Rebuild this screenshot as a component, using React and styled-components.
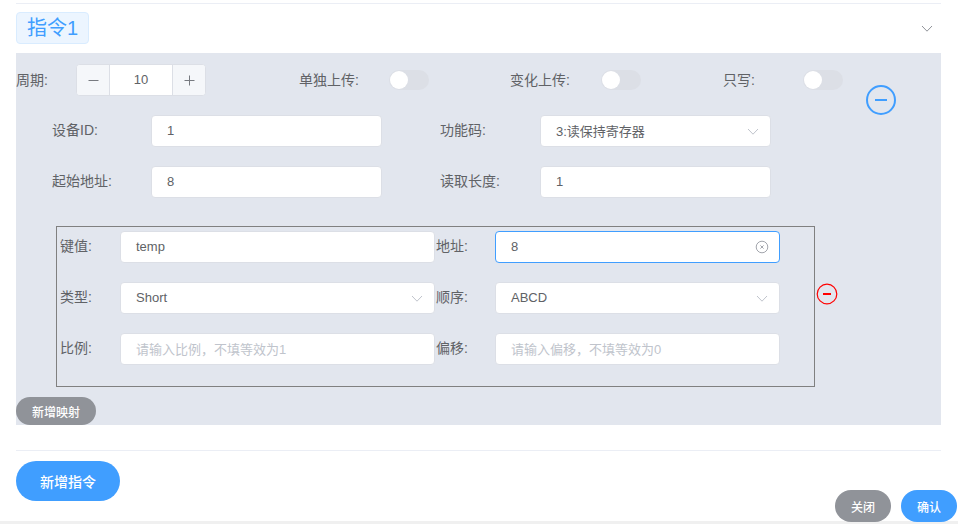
import React from 'react';
import styled, { createGlobalStyle } from 'styled-components';

const GlobalStyle = createGlobalStyle`
  html, body {
    margin: 0;
    padding: 0;
    background: #fff;
  }
  body {
    font-family: "Liberation Sans", "Noto Sans CJK SC", sans-serif;
    font-size: 14px;
    color: #606266;
  }
`;

const Page = styled.div`
  width: 958px;
  height: 524px;
  overflow: hidden;
  display: flex;
  flex-direction: column;
`;

const Content = styled.div`
  height: 521px;
  flex: none;
  padding: 3px 17px 0 16px;
  box-sizing: border-box;
  display: flex;
  flex-direction: column;
`;

const CollapseHeader = styled.div`
  border-top: 1px solid #ebeef5;
  height: 50px;
  flex: none;
  display: flex;
  align-items: flex-start;
  justify-content: space-between;
  padding-top: 8px;
  box-sizing: border-box;
`;

const Tag = styled.span`
  box-sizing: border-box;
  width: 73px;
  height: 32px;
  line-height: 30px;
  text-align: center;
  font-size: 20px;
  color: #409eff;
  background: #ecf5ff;
  border: 1px solid #d9ecff;
  border-radius: 4px;
`;

const Chevron = ({ color = '#c0c4cc' }) => (
  <svg width="12" height="12" viewBox="0 0 12 12" fill="none">
    <path d="M1 4l5 5.2L11 4" stroke={color} strokeWidth="1" />
  </svg>
);

const HeaderArrow = styled.span`
  display: flex;
  margin: 10px 8px 0 0;
`;

const Panel = styled.div`
  height: 372px;
  flex: none;
  background: #e2e6ee;
  display: flex;
  flex-direction: column;
`;

const TopRow = styled.div`
  height: 32px;
  display: flex;
  align-items: center;
`;

const Label = styled.span`
  width: ${p => p.$width}px;
  flex: none;
  margin-left: ${p => p.$left || 0}px;
  line-height: 30px;
  white-space: nowrap;
`;

const FormLabel = styled(Label)`
  margin-bottom: 2px;
`;

const Stepper = styled.div`
  box-sizing: border-box;
  width: 130px;
  height: 32px;
  display: flex;
  background: #fff;
  border: 1px solid #dcdfe6;
  border-radius: 4px;
  overflow: hidden;
  font-size: 13px;
`;

const StepButton = styled.span`
  width: 32px;
  flex: none;
  display: flex;
  align-items: center;
  justify-content: center;
  background: #f5f7fa;
  ${p => (p.$right ? 'border-left' : 'border-right')}: 1px solid #dcdfe6;
`;

const StepIcon = styled.svg`
  margin-left: 1px;
`;

const StepValue = styled.span`
  flex: 1;
  text-align: center;
  line-height: 29px;
`;

const Switch = styled.span`
  width: 40px;
  height: 20px;
  flex: none;
  border-radius: 10px;
  background: #dcdfe6;
  position: relative;

  &::after {
    content: '';
    position: absolute;
    left: 1px;
    top: 1px;
    width: 18px;
    height: 18px;
    border-radius: 50%;
    background: #fff;
  }
`;

const FormBlock = styled.div`
  margin-top: 11px;
  display: flex;
  align-items: flex-start;
`;

const FormRow = styled.div`
  display: flex;
  align-items: center;
  margin-top: 19px;
  margin-left: 36px;
`;

const Field = styled.div`
  box-sizing: border-box;
  width: ${p => p.$width}px;
  height: 32px;
  flex: none;
  display: flex;
  align-items: center;
  justify-content: space-between;
  padding: 0 11px 0 15px;
  background: #fff;
  border: 1px solid ${p => (p.$focus ? '#409eff' : '#dcdfe6')};
  border-radius: 4px;
  font-size: 13px;
  color: ${p => (p.$placeholder ? '#c0c4cc' : '#606266')};
  white-space: nowrap;
`;

const FieldText = styled.span`
  margin-bottom: 2px;
`;

const RemoveCommand = styled.svg`
  flex: none;
  margin: 20px 0 0 22px;
`;

const MappingWrap = styled.div`
  margin: 28px 0 0 40px;
  display: flex;
  align-items: flex-start;
`;

const MappingBox = styled.div`
  box-sizing: border-box;
  width: 759px;
  height: 161px;
  border: 1px solid #808080;
  padding-top: 4px;
  display: flex;
  flex-direction: column;
  gap: 19px;
`;

const MappingRow = styled.div`
  display: flex;
  align-items: center;
  padding-left: 3px;
`;

const RemoveMapping = styled.svg`
  flex: none;
  margin: 57px 0 0 1px;
`;

const ClearSvg = styled.svg`
  margin-right: -1px;
`;

const Pill = styled.button`
  border: none;
  padding: 0;
  width: ${p => p.$width}px;
  height: ${p => p.$height}px;
  border-radius: ${p => p.$height / 2}px;
  background: ${p => (p.$gray ? '#909399' : '#409eff')};
  color: #fff;
  font-family: inherit;
  font-size: ${p => p.$size || 12}px;
  font-weight: 500;
  flex: none;
`;

const AddMapping = styled(Pill)`
  margin-top: 10px;
`;

const Divider = styled.div`
  margin-top: 25px;
  border-top: 1px solid #ebeef5;
`;

const BottomRow = styled.div`
  height: 61px;
  flex: none;
  margin: 10px -17px 0 0;
  padding-right: 1px;
  display: flex;
  align-items: flex-end;
  position: relative;
  z-index: 1;
`;

const AddCommand = styled(Pill)`
  align-self: flex-start;
  margin-right: auto;
`;

const Close = styled(Pill)`
  margin-right: 10px;
`;

const BottomBar = styled.div`
  height: 3px;
  flex: none;
  background: #f0f0f0;
`;

const ClearIcon = () => (
  <ClearSvg width="14" height="14" viewBox="0 0 14 14" fill="none" stroke="#a3a6ad">
    <circle cx="7" cy="7" r="5.8" />
    <path d="M5.4 5.4l3.2 3.2M8.6 5.4l-3.2 3.2" />
  </ClearSvg>
);

const Minus = () => (
  <StepIcon width="11" height="11" viewBox="0 0 11 11">
    <path d="M0.5 5.5h10" stroke="#777a80" strokeWidth="1" />
  </StepIcon>
);

const Plus = () => (
  <StepIcon width="11" height="11" viewBox="0 0 11 11">
    <path d="M0.5 5.5h10M5.5 0.5v10" stroke="#777a80" strokeWidth="1" />
  </StepIcon>
);

const mappings = [
  {
    left: ['键值:', 'temp'],
    right: ['地址:', '8'],
    rightFocus: true,
  },
  {
    left: ['类型:', 'Short'],
    right: ['顺序:', 'ABCD'],
    select: true,
  },
  {
    left: ['比例:', '请输入比例，不填等效为1'],
    right: ['偏移:', '请输入偏移，不填等效为0'],
    placeholder: true,
  },
];

const App = () => (
  <Page>
    <GlobalStyle />
    <Content>
      <CollapseHeader>
        <Tag>指令1</Tag>
        <HeaderArrow><Chevron color="#909399" /></HeaderArrow>
      </CollapseHeader>
      <Panel>
        <FormBlock>
          <div>
            <TopRow>
              <Label $width={60}>周期:</Label>
              <Stepper>
                <StepButton><Minus /></StepButton>
                <StepValue>10</StepValue>
                <StepButton $right><Plus /></StepButton>
              </Stepper>
              <Label $width={90} $left={93}>单独上传:</Label>
              <Switch />
              <Label $width={91} $left={81}>变化上传:</Label>
              <Switch />
              <Label $width={80} $left={82}>只写:</Label>
              <Switch />
            </TopRow>
            <FormRow>
              <FormLabel $width={99}>设备ID:</FormLabel>
              <Field $width={231}><FieldText>1</FieldText></Field>
              <FormLabel $width={100} $left={58}>功能码:</FormLabel>
              <Field $width={231}><FieldText>3:读保持寄存器</FieldText><Chevron /></Field>
            </FormRow>
            <FormRow>
              <FormLabel $width={99}>起始地址:</FormLabel>
              <Field $width={231}><FieldText>8</FieldText></Field>
              <FormLabel $width={100} $left={58}>读取长度:</FormLabel>
              <Field $width={231}><FieldText>1</FieldText></Field>
            </FormRow>
          </div>
          <RemoveCommand width="32" height="32" viewBox="0 0 32 32" fill="none" stroke="#409eff">
            <circle cx="16" cy="16" r="14" strokeWidth="2" />
            <path d="M10 16h12" strokeWidth="2" />
          </RemoveCommand>
        </FormBlock>
        <MappingWrap>
          <MappingBox>
            {mappings.map(row => (
              <MappingRow key={row.left[0]}>
                <FormLabel $width={60}>{row.left[0]}</FormLabel>
                <Field $width={315} $placeholder={row.placeholder}>
                  <FieldText>{row.left[1]}</FieldText>
                  {row.select && <Chevron />}
                </Field>
                <FormLabel $width={59} $left={1}>{row.right[0]}</FormLabel>
                <Field $width={285} $placeholder={row.placeholder} $focus={row.rightFocus}>
                  <FieldText>{row.right[1]}</FieldText>
                  {row.select && <Chevron />}
                  {row.rightFocus && <ClearIcon />}
                </Field>
              </MappingRow>
            ))}
          </MappingBox>
          <RemoveMapping width="22" height="22" viewBox="0 0 22 22" fill="none" stroke="#ff0000">
            <circle cx="11" cy="11" r="9.8" strokeWidth="1.2" />
            <path d="M7 11h8" strokeWidth="2" />
          </RemoveMapping>
        </MappingWrap>
        <AddMapping $gray $width={80} $height={28}>新增映射</AddMapping>
      </Panel>
      <Divider />
      <BottomRow>
        <AddCommand $width={104} $height={40} $size={14}>新增指令</AddCommand>
        <Close $gray $width={56} $height={32}>关闭</Close>
        <Pill $width={56} $height={32}>确认</Pill>
      </BottomRow>
    </Content>
    <BottomBar />
  </Page>
);

export default App;
